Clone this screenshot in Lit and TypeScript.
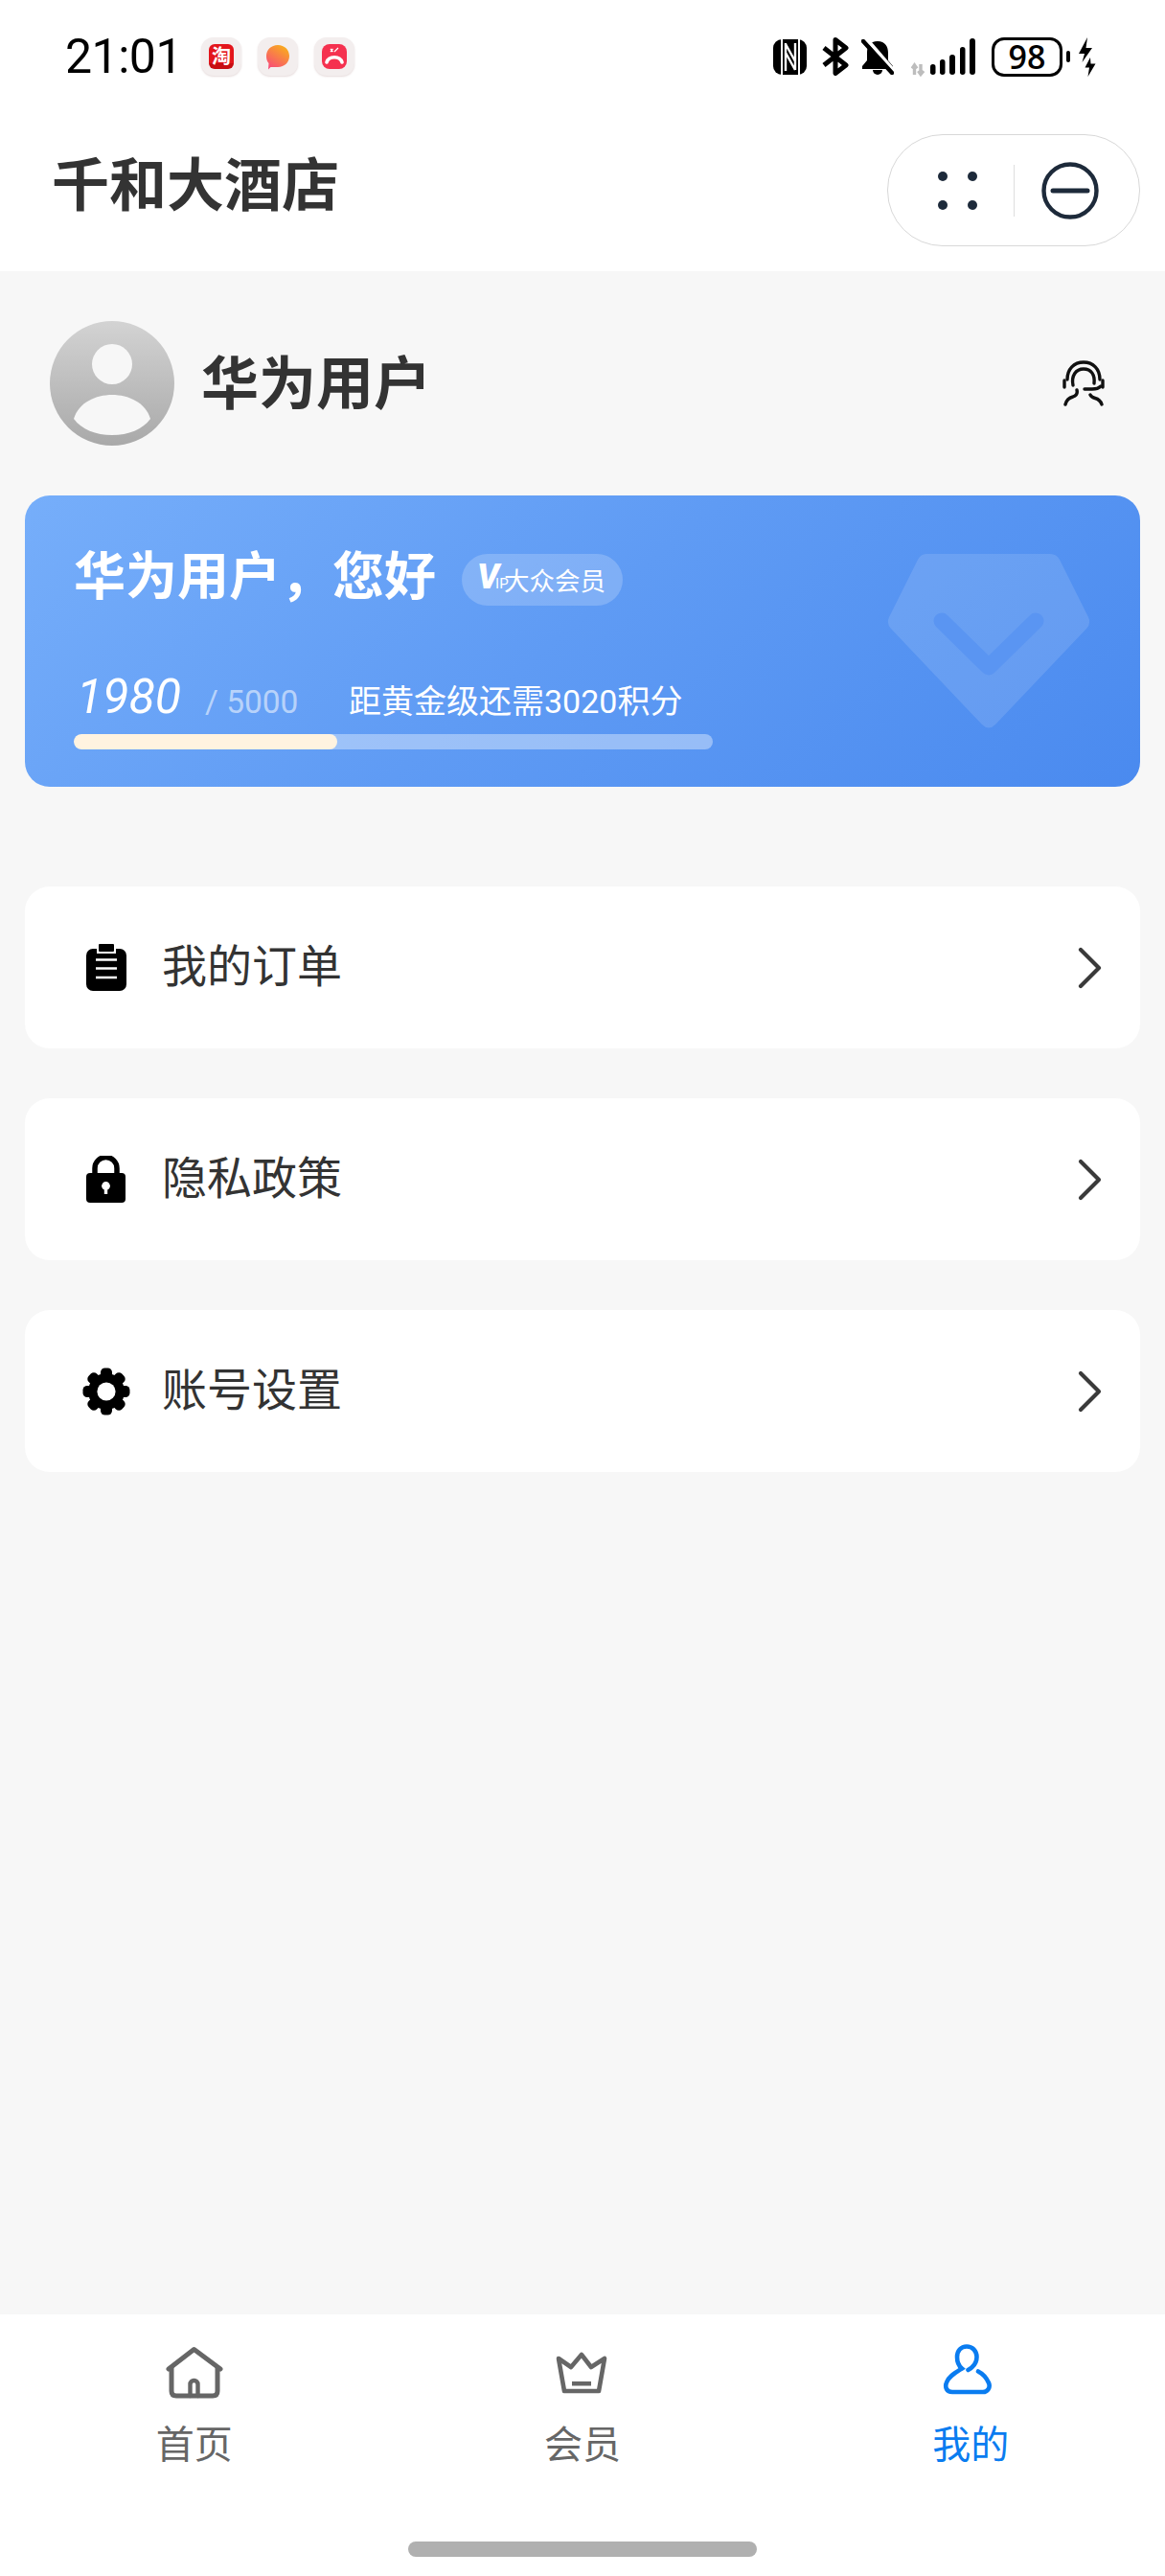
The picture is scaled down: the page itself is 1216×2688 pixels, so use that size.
import { html, svg, css, LitElement, TemplateResult } from 'lit';
import { customElement, property } from 'lit/decorators.js';

interface MenuEntry {
  label: string;
  icon: TemplateResult;
}

interface TabEntry {
  label: string;
  icon: TemplateResult;
  active?: boolean;
}

const clipboardIcon = html`<svg width="50" height="50" viewBox="-4 0 50 50">
  <rect x="0" y="5" width="42" height="44" rx="7" fill="#000" />
  <rect x="11" y="2" width="20" height="8" fill="#fff" />
  <rect x="13" y="0" width="16" height="8" rx="1" fill="#000" />
  <path d="M10 16.5H32M10 25.5H32M10 35H32" stroke="#fff" stroke-width="2.6" />
</svg>`;

const lockIcon = html`<svg width="50" height="50" viewBox="-4 0 50 50">
  <path d="M9 20V13a11.5 11.5 0 0 1 23 0v7" fill="none" stroke="#000" stroke-width="5.5" />
  <rect x="0" y="18" width="41" height="31" rx="4" fill="#000" />
  <circle cx="20.5" cy="31.5" r="4.4" fill="#fff" />
  <rect x="18.8" y="32" width="3.4" height="8" fill="#fff" />
</svg>`;

const gearIcon = html`<svg width="50" height="50" viewBox="0 0 50 50">
  <g fill="#000">
    <circle cx="25" cy="25" r="19" />
    ${[0, 45, 90, 135].map(
      a => svg`<rect x="19" y="0.5" width="12" height="49" rx="4.5" transform="rotate(${a} 25 25)" />`
    )}
  </g>
  <circle cx="25" cy="25" r="9.6" fill="#fff" />
</svg>`;

const homeIcon = html`<svg width="60" height="60" viewBox="0 0 60 60" fill="none" stroke="#666" stroke-width="5" stroke-linecap="round" stroke-linejoin="round">
  <path d="M3 27L29.5 6.5L57 27" />
  <path d="M6 26V50q0 5 5 5H49q5 0 5-5V26" />
  <path d="M25.5 55V43a4 4 0 0 1 8 0V55" stroke-width="4.4" />
</svg>`;

const crownIcon = html`<svg width="60" height="60" viewBox="0 0 60 60" fill="none" stroke="#666" stroke-width="4.6" stroke-linejoin="round">
  <path d="M5 16L18 25L29 12L39 25L53 16L47 50H11Z" />
  <rect x="19" y="40" width="20" height="4.5" fill="#666" stroke="none" />
</svg>`;

const personIcon = html`<svg width="60" height="60" viewBox="0 0 60 60" fill="none" stroke="#0a7cf0" stroke-width="4.6" stroke-linecap="round">
  <path d="M27.5 28C33 25 36.5 21 36.5 14.5C36.5 8 32 3.5 26 3.5C20 3.5 16 8 16 14.5C16 20 18 24 21 26.5C14 31 7 35 5 41C3 46 5 51 11 51H43C48 51 51 46 49 41.5C47 37 43 32 38 29.5" />
</svg>`;

@customElement('app-status-bar')
export class AppStatusBar extends LitElement {
  static styles = css`
    :host {
      display: flex;
      align-items: center;
      height: 118px;
      padding: 0 72px 0 68px;
      background: #fff;
      color: #000;
    }

    .time {
      width: 142px;
      font: 400 50px/60px Roboto, sans-serif;
      letter-spacing: -0.5px;
    }

    .tile {
      display: flex;
      align-items: center;
      justify-content: center;
      width: 42px;
      height: 40px;
      margin-right: 17px;
      border-radius: 13px;
      background: #f3eeee;
      box-shadow: 0 1px 2px rgba(180, 150, 150, 0.35);
    }

    .tao {
      width: 26px;
      height: 26px;
      border-radius: 6px;
      background: linear-gradient(#e3161c 76%, #c80d12 76%);
      color: #fff;
      text-align: center;
      font: 700 20px/23px 'Noto Sans CJK SC', sans-serif;
    }

    .hangup {
      display: flex;
      width: 26px;
      height: 26px;
      border-radius: 8px;
      background: #f5314f;
    }

    .right {
      display: flex;
      align-items: center;
      margin-left: auto;
    }

    .right svg {
      display: block;
      flex: none;
    }

    .battery {
      display: flex;
      align-items: center;
      justify-content: center;
      box-sizing: border-box;
      width: 74px;
      height: 41px;
      margin-left: 17px;
      border: 3.5px solid #000;
      border-radius: 13px;
      font: 600 34px/1 'Open Sans', sans-serif;
    }

    .nub {
      width: 4px;
      height: 12px;
      margin: 0 9px 0 4px;
      border-radius: 2px;
      background: #000;
    }
  `;

  render() {
    return html`
      <div class="time">21:01</div>
      <div class="tile"><div class="tao">淘</div></div>
      <div class="tile">
        <svg width="26" height="27" viewBox="0 0 26 27">
          <defs>
            <linearGradient id="msg" x1="0.8" y1="0" x2="0.2" y2="1">
              <stop offset="0" stop-color="#f9b01a" />
              <stop offset="1" stop-color="#f8487a" />
            </linearGradient>
          </defs>
          <path d="M13 1C20 1 25 6 25 12.5S20 24 13 24H5.5L3 26.5L3.5 20C1.8 18 1 15.5 1 12.5C1 6 6 1 13 1Z" fill="url(#msg)" />
        </svg>
      </div>
      <div class="tile">
        <div class="hangup">
          <svg width="26" height="26" viewBox="0 0 26 26" fill="none" stroke="#fff">
            <path d="M9 5L11.5 8M11.5 5L9 8M13 8L17 4" stroke-width="1.2" />
            <path d="M5 19C7 12 19 12 21 19" stroke-width="3.6" stroke-linecap="round" />
          </svg>
        </div>
      </div>

      <div class="right">
        <svg width="35" height="37" viewBox="0 0 35 37">
          <rect width="35" height="37" rx="9" fill="#000" />
          <path d="M9 0V37M27 0V37" fill="none" stroke="#fff" stroke-width="2" />
          <path d="M13 4V33M13 5L23 23M23 4V32M13 14L23 32" fill="none" stroke="#fff" stroke-width="2.4" />
        </svg>
        <svg style="margin-left:16px" width="28" height="40" viewBox="0 0 28 40" fill="none" stroke="#000" stroke-width="5" stroke-linejoin="round">
          <path d="M2 11L25 29L14 37.5V2.5L25 11L2 29" />
        </svg>
        <svg style="margin-left:13px" width="34" height="37" viewBox="0 0 34 37">
          <path d="M17 2C9 2 6 8 6 14V22L1 28V31H33V28L28 22V14C28 8 25 2 17 2Z" fill="#000" />
          <path d="M12 32a5 5 0 0 0 10 0Z" fill="#000" />
          <path d="M4 -2L36 35" stroke="#fff" stroke-width="4" />
          <path d="M2 2L32 35" stroke="#000" stroke-width="4.4" stroke-linecap="round" />
        </svg>
        <svg style="margin-left:18px" width="67" height="42" viewBox="0 0 67 42">
          <path d="M3.5 40V30M1 33.5L3.5 30L6 33.5M10 29V39M7.5 36L10 39.5L13 36" fill="none" stroke="#bdbdbd" stroke-width="3.4" />
          <g fill="#000">
            <rect x="20" y="29" width="5.5" height="11" rx="2.7" />
            <rect x="30" y="24" width="5.5" height="16" rx="2.7" />
            <rect x="40" y="19" width="6" height="21" rx="3" />
            <rect x="51" y="11" width="5.5" height="29" rx="2.7" />
            <rect x="61" y="2" width="6" height="38" rx="3" />
          </g>
        </svg>
        <div class="battery">98</div>
        <div class="nub"></div>
        <svg width="18" height="41" viewBox="0 0 18 41" fill="#000">
          <path d="M9 0L0 17H6L3.5 26L14 11H7.5Z" />
          <path d="M12 21L6.5 31.5H11L9.5 41L17.5 27.5H12.5Z" />
        </svg>
      </div>
    `;
  }
}

@customElement('app-header')
export class AppHeader extends LitElement {
  static styles = css`
    :host {
      display: flex;
      justify-content: space-between;
      height: 165px;
      padding: 0 26px 0 54px;
      background: #fff;
    }

    .title {
      margin-top: 41px;
      color: #333;
      font: 700 60px/60px 'Noto Sans CJK SC', sans-serif;
    }

    .capsule {
      display: flex;
      align-items: center;
      box-sizing: border-box;
      width: 264px;
      height: 117px;
      margin-top: 22px;
      padding-left: 51px;
      border: 1.5px solid #d8d8d8;
      border-radius: 58px;
    }

    .sep {
      width: 1px;
      height: 54px;
      margin-left: 36px;
      background: #dedede;
    }

    svg {
      display: block;
    }
  `;

  render() {
    return html`
      <div class="title">千和大酒店</div>
      <div class="capsule">
        <svg width="44" height="42" viewBox="0 0 44 42" fill="#1d2a3a">
          <circle cx="6" cy="6" r="5" />
          <circle cx="37" cy="6" r="5" />
          <circle cx="6" cy="36" r="5" />
          <circle cx="37" cy="36" r="5" />
        </svg>
        <div class="sep"></div>
        <svg style="margin-left:28px" width="60" height="60" viewBox="0 0 60 60" fill="none" stroke="#1d2a3a" stroke-width="4.4">
          <circle cx="30" cy="30" r="27.5" />
          <path d="M12 30H48" stroke-linecap="round" stroke-width="5" />
        </svg>
      </div>
    `;
  }
}

@customElement('app-member-card')
export class AppMemberCard extends LitElement {
  @property({ type: Number }) points = 1980;

  @property({ type: Number }) total = 5000;

  static styles = css`
    :host {
      display: block;
      position: relative;
      box-sizing: border-box;
      height: 304px;
      padding: 51px 0 0 51px;
      border-radius: 26px;
      background: linear-gradient(140deg, #76aefa 0%, #5f9bf4 48%, #4a8aef 100%);
      color: #fff;
      overflow: hidden;
    }

    .mark {
      position: absolute;
      left: 900px;
      top: 61px;
    }

    .top {
      position: relative;
      display: flex;
      align-items: center;
      height: 60px;
    }

    .hello {
      font: 700 54px/60px 'Noto Sans CJK SC', sans-serif;
    }

    .badge {
      display: flex;
      align-items: center;
      height: 54px;
      margin: 14px 0 0 27px;
      padding: 0 18px 0 16px;
      border-radius: 27px;
      background: rgba(255, 255, 255, 0.2);
      font: 400 26.5px/54px 'Noto Sans CJK SC', sans-serif;
    }

    .vip {
      display: flex;
      align-items: baseline;
      width: 28px;
      font-family: Roboto, sans-serif;
    }

    .vip b {
      font-size: 36px;
      font-weight: 900;
      font-style: italic;
      letter-spacing: -4px;
    }

    .vip i {
      font-size: 15px;
      font-style: normal;
    }

    .score {
      position: relative;
      display: flex;
      align-items: baseline;
      height: 54px;
      margin-top: 74px;
      font-family: Roboto, 'Noto Sans CJK SC', sans-serif;
    }

    .now {
      width: 137px;
      padding-left: 3px;
      box-sizing: border-box;
      font-size: 50px;
      font-style: italic;
      line-height: 50px;
    }

    .goal {
      width: 150px;
      color: rgba(255, 255, 255, 0.55);
      font-size: 33.5px;
    }

    .need {
      font-size: 34px;
    }

    .track {
      position: relative;
      width: 667px;
      height: 16px;
      margin-top: 10px;
      border-radius: 8px;
      background: rgba(255, 255, 255, 0.38);
      overflow: hidden;
    }

    .fill {
      height: 100%;
      border-radius: 8px;
      background: #fff3e0;
    }
  `;

  render() {
    const left = this.total - this.points;
    const width = Math.round((this.points / this.total) * 1000) / 10 + 1.7;
    return html`
      <svg class="mark" width="212" height="183" viewBox="0 0 212 183">
        <path
          d="M41 0H170Q177 0 180 6L210 66Q213 73 208 78L113 178Q106 185 99 178L4 78Q-1 73 2 66L32 6Q35 0 41 0Z"
          fill="#fff"
          fill-opacity="0.12"
        />
        <path d="M57 70L106 118L155 70" fill="none" stroke="#5a95f2" stroke-width="17" stroke-linecap="round" stroke-linejoin="round" />
      </svg>
      <div class="top">
        <div class="hello">华为用户，您好</div>
        <div class="badge">
          <span class="vip"><b>V</b><i>IP</i></span>大众会员
        </div>
      </div>
      <div class="score">
        <div class="now">${this.points}</div>
        <div class="goal">/ ${this.total}</div>
        <div class="need">距黄金级还需${left}积分</div>
      </div>
      <div class="track"><div class="fill" style="width:${width}%"></div></div>
    `;
  }
}

@customElement('app-root')
export class AppRoot extends LitElement {
  static styles = css`
    :host {
      display: flex;
      flex-direction: column;
      width: 1216px;
      min-height: 2688px;
      background: #f7f7f7;
      font-family: 'Noto Sans CJK SC', sans-serif;
    }

    main {
      flex: 1;
      padding: 0 26px;
    }

    .user {
      display: flex;
      align-items: center;
      height: 234px;
      padding-left: 26px;
      padding-right: 37px;
    }

    .avatar {
      display: block;
      margin-right: 28px;
    }

    .name {
      flex: 1;
      margin-top: -8px;
      color: #333;
      font: 700 60px/70px 'Noto Sans CJK SC', sans-serif;
    }

    .menu {
      display: flex;
      flex-direction: column;
      gap: 52px;
      margin-top: 104px;
    }

    .row {
      display: flex;
      align-items: center;
      height: 169px;
      padding: 0 39px 0 60px;
      border-radius: 26px;
      background: #fff;
    }

    .row .label {
      flex: 1;
      margin-left: 33px;
      margin-top: -10px;
      color: #333;
      font-size: 47px;
      line-height: 60px;
    }

    .tabbar {
      display: flex;
      flex-direction: column;
      height: 273px;
      background: #fff;
    }

    .tabs {
      display: grid;
      grid-template-columns: repeat(3, 1fr);
      padding-top: 30px;
    }

    .tab {
      display: flex;
      flex-direction: column;
      align-items: center;
      color: #666;
      font-size: 40px;
      line-height: 48px;
    }

    .tab.active {
      color: #0a7cf0;
    }

    .tab svg {
      display: block;
      margin-bottom: 19px;
    }

    .home-bar {
      width: 364px;
      height: 16px;
      margin: auto auto 20px;
      border-radius: 8px;
      background: #b0b0b0;
    }
  `;

  menu: MenuEntry[] = [
    { label: '我的订单', icon: clipboardIcon },
    { label: '隐私政策', icon: lockIcon },
    { label: '账号设置', icon: gearIcon },
  ];

  tabs: TabEntry[] = [
    { label: '首页', icon: homeIcon },
    { label: '会员', icon: crownIcon },
    { label: '我的', icon: personIcon, active: true },
  ];

  renderRow(entry: MenuEntry): TemplateResult {
    return html`<div class="row">
      ${entry.icon}
      <div class="label">${entry.label}</div>
      <svg width="26" height="44" viewBox="0 0 26 44" fill="none" stroke="#3a3a3a" stroke-width="4.2" stroke-linecap="round" stroke-linejoin="round">
        <path d="M3 3L22 22L3 41" />
      </svg>
    </div>`;
  }

  render() {
    return html`
      <app-status-bar></app-status-bar>
      <app-header></app-header>
      <main>
        <div class="user">
          <svg class="avatar" width="130" height="130" viewBox="0 0 130 130">
            <defs>
              <linearGradient id="face" x1="0" y1="0" x2="0" y2="1">
                <stop offset="0" stop-color="#d3d3d3" />
                <stop offset="1" stop-color="#a9a9a9" />
              </linearGradient>
            </defs>
            <circle cx="65" cy="65" r="65" fill="url(#face)" />
            <circle cx="65" cy="45" r="21" fill="#f7f7f7" />
            <path d="M25 102C30 85 48 77 65 77C82 77 100 85 105 102C97 113 82 119 65 119C48 119 33 113 25 102Z" fill="#f7f7f7" />
          </svg>
          <div class="name">华为用户</div>
          <svg width="44" height="48" viewBox="0 0 44 48" fill="none" stroke="#111" stroke-width="3.4" stroke-linecap="round">
            <path d="M5 20C5 9 12 2 22 2C32 2 39 9 39 20" />
            <path d="M2 21V28M42 21V28" />
            <path d="M11 26C9 16 14 9 22 9C30 9 34 15 33 24" />
            <path d="M23 30H31C35 30 38 29 40 27" />
            <path d="M15 31C16 35 14 37 11 38C7 39 4 42 3 46M29 36C30 38 32 39 34 39.5C38 40.5 40 43 41 46" />
          </svg>
        </div>
        <app-member-card></app-member-card>
        <div class="menu">${this.menu.map(m => this.renderRow(m))}</div>
      </main>
      <div class="tabbar">
        <div class="tabs">
          ${this.tabs.map(
            t => html`<div class="tab ${t.active ? 'active' : ''}">${t.icon}<span>${t.label}</span></div>`
          )}
        </div>
        <div class="home-bar"></div>
      </div>
    `;
  }
}
